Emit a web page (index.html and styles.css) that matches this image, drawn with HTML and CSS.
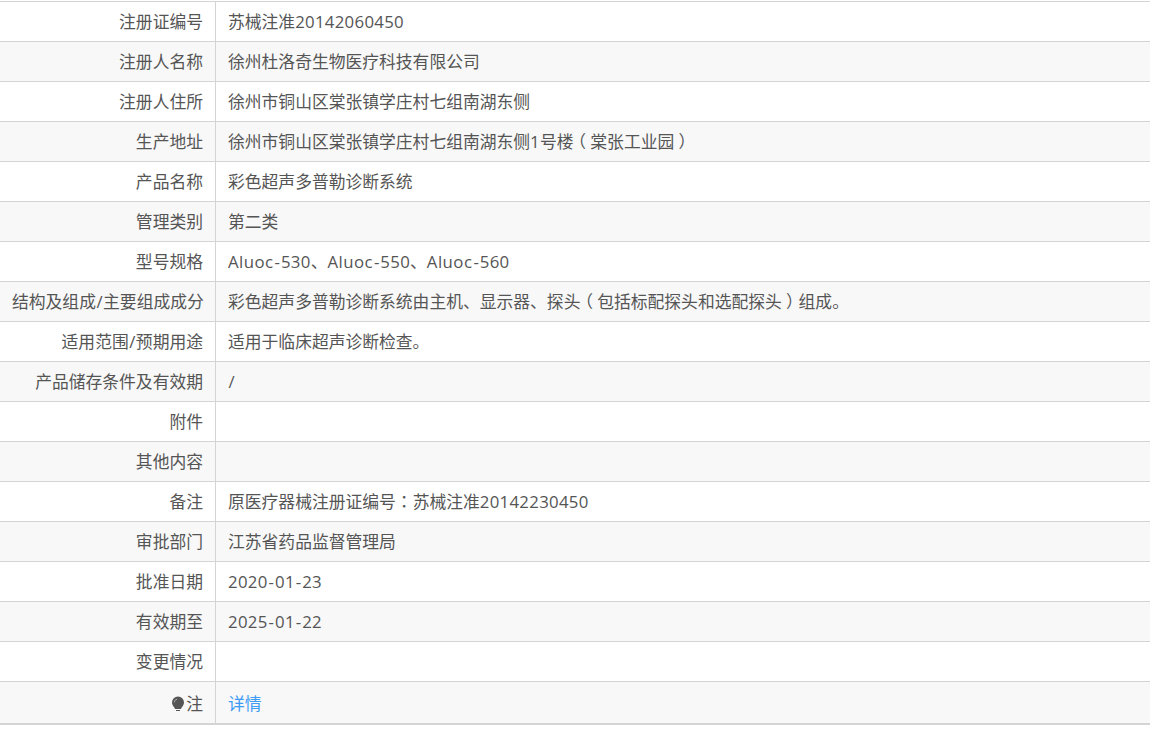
FILE: index.html
```html
<!DOCTYPE html>
<html lang="zh-CN">
<head>
<meta charset="utf-8">
<title>注册证详情</title>
<link rel="stylesheet" href="styles.css">
</head>
<body>
<table class="detail">
<tbody>
<tr><th>注册证编号</th><td>苏械注准<span class="lat">20142060450</span></td></tr>
<tr><th>注册人名称</th><td>徐州杜洛奇生物医疗科技有限公司</td></tr>
<tr><th>注册人住所</th><td>徐州市铜山区棠张镇学庄村七组南湖东侧</td></tr>
<tr><th>生产地址</th><td>徐州市铜山区棠张镇学庄村七组南湖东侧<span class="lat">1</span>号楼<span class="paren">（</span>棠张工业园<span class="paren">）</span></td></tr>
<tr><th>产品名称</th><td>彩色超声多普勒诊断系统</td></tr>
<tr><th>管理类别</th><td>第二类</td></tr>
<tr><th>型号规格</th><td><span class="word">Aluoc</span><span class="hy">-</span><span class="lat">530</span>、<span class="word">Aluoc</span><span class="hy">-</span><span class="lat">550</span>、<span class="word">Aluoc</span><span class="hy">-</span><span class="lat">560</span></td></tr>
<tr><th>结构及组成<span class="slash">/</span>主要组成成分</th><td>彩色超声多普勒诊断系统由主机、显示器、探头<span class="paren">（</span>包括标配探头和选配探头<span class="paren">）</span>组成。</td></tr>
<tr><th>适用范围<span class="slash">/</span>预期用途</th><td>适用于临床超声诊断检查。</td></tr>
<tr><th>产品储存条件及有效期</th><td><span class="slash">/</span></td></tr>
<tr><th>附件</th><td></td></tr>
<tr><th>其他内容</th><td></td></tr>
<tr><th>备注</th><td>原医疗器械注册证编号<span class="cp" lang="zh-TW">：</span>苏械注准<span class="lat">20142230450</span></td></tr>
<tr><th>审批部门</th><td>江苏省药品监督管理局</td></tr>
<tr><th>批准日期</th><td><span class="lat">2020</span><span class="hy">-</span><span class="lat">01</span><span class="hy">-</span><span class="lat">23</span></td></tr>
<tr><th>有效期至</th><td><span class="lat">2025</span><span class="hy">-</span><span class="lat">01</span><span class="hy">-</span><span class="lat">22</span></td></tr>
<tr><th>变更情况</th><td></td></tr>
<tr class="last"><th><svg class="bulb" viewBox="0 0 14 16" width="14" height="16" aria-hidden="true"><path d="M7 .5a6 6 0 0 0-6 6c0 2.300 1.300 3.600 2.300 4.900.5.700.7 1.100.8 1.600h5.800c.1-.5.300-.9.800-1.600 1-1.300 2.300-2.600 2.300-4.900a6 6 0 0 0-6-6z" fill="#555"/><path d="M5 14h4v1H5z" fill="#555"/><path d="M3.200 6.500a3.800 3.800 0 0 1 3-3.400" fill="none" stroke="#aaa" stroke-width="1"/></svg>注</th><td><a class="link" href="#">详情</a></td></tr>
</tbody>
</table>
</body>
</html>
```
FILE: styles.css
```css
html, body {
  margin: 0;
  padding: 0;
  background: #fff;
}
body {
  padding-top: 1px;
  font-family: "Open Sans", "Noto Sans CJK SC", sans-serif;
  font-size: 16.8px;
  color: #555;
}
.detail {
  width: 100%;
  border-collapse: collapse;
  table-layout: fixed;
  border-top: 1px solid #d4d4d4;
  border-bottom: 2px solid #d4d4d4;
}
.detail tr {
  height: 40px;
  border-top: 1px solid #d4d4d4;
}
.detail tr:first-child {
  border-top: 0;
}
.detail tr:nth-child(even) {
  background: #f8f8f8;
}
.detail tr.last {
  height: 42px;
}
.detail th, .detail td {
  padding: 2px 12px 0;
  font-weight: 400;
  line-height: 1.2;
  white-space: nowrap;
}
.detail th {
  width: 191px;
  text-align: right;
  border-right: 1px solid #d4d4d4;
}
.detail .last th, .detail .last td {
  padding-top: 4px;
}
.lat {
  letter-spacing: .3px;
}
.word {
  letter-spacing: .45px;
}
.hy {
  padding: 0 1px;
}
.slash {
  padding: 0 .5px;
}
.cp {
  font-family: "Noto Sans CJK TC", sans-serif;
  line-height: 0;
}
.paren {
  font-feature-settings: "halt";
  padding: 0 4.2px;
}
.bulb {
  vertical-align: -2px;
  margin-right: 1px;
}
.link {
  color: #3f9cf5;
  text-decoration: none;
}
```
